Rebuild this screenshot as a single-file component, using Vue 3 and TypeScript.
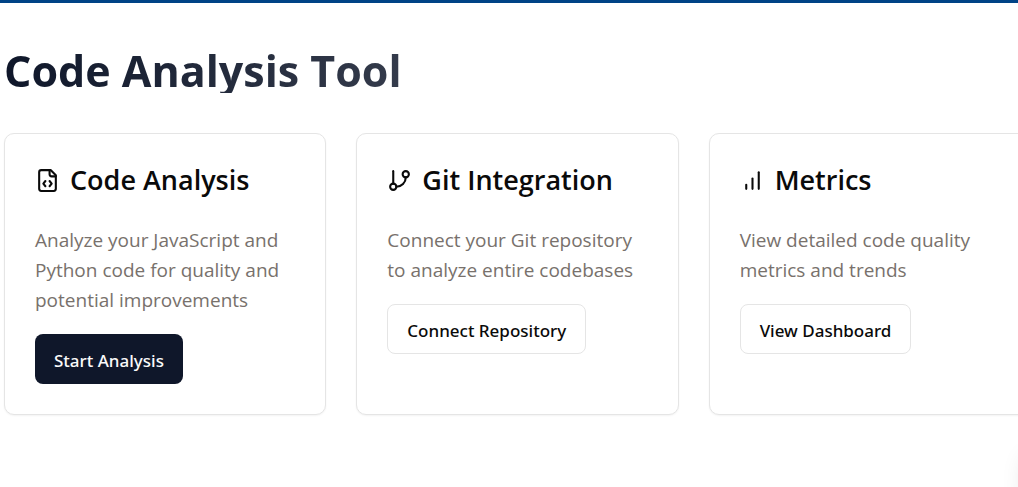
<script setup lang="ts">
interface Feature {
  icon: 'file' | 'branch' | 'bars'
  title: string
  description: string
  action: string
  primary?: boolean
}

const features: Feature[] = [
  {
    icon: 'file',
    title: 'Code Analysis',
    description: 'Analyze your JavaScript and Python code for quality and potential improvements',
    action: 'Start Analysis',
    primary: true,
  },
  {
    icon: 'branch',
    title: 'Git Integration',
    description: 'Connect your Git repository to analyze entire codebases',
    action: 'Connect Repository',
  },
  {
    icon: 'bars',
    title: 'Metrics',
    description: 'View detailed code quality metrics and trends',
    action: 'View Dashboard',
  },
]
</script>

<template>
  <div class="page">
    <main class="content">
      <h1 class="heading">Code Analysis Tool</h1>
      <div class="cards">
        <section v-for="feature in features" :key="feature.title" class="card">
          <h2 class="title">
            <svg class="icon" viewBox="0 0 24 24" aria-hidden="true">
              <template v-if="feature.icon === 'file'">
                <path d="M15 2H6a2 2 0 0 0-2 2v16a2 2 0 0 0 2 2h12a2 2 0 0 0 2-2V7Z" />
                <path d="M14 2v4a2 2 0 0 0 2 2h4" />
                <path d="M10 12.5 8 15l2 2.5" />
                <path d="m14 12.5 2 2.5-2 2.5" />
              </template>
              <template v-else-if="feature.icon === 'branch'">
                <line x1="6" x2="6" y1="3" y2="15" />
                <circle cx="18" cy="6" r="3" />
                <circle cx="6" cy="18" r="3" />
                <path d="M18 9a9 9 0 0 1-9 9" />
              </template>
              <template v-else>
                <line x1="6" x2="6" y1="20" y2="16" />
                <line x1="12" x2="12" y1="20" y2="10" />
                <line x1="18" x2="18" y1="20" y2="4" />
              </template>
            </svg>
            <span>{{ feature.title }}</span>
          </h2>
          <p class="description">{{ feature.description }}</p>
          <button type="button" class="button" :class="{ primary: feature.primary }">
            {{ feature.action }}
          </button>
        </section>
      </div>
    </main>
    <div class="corner-panel" aria-hidden="true"></div>
  </div>
</template>

<style>
body {
  margin: 0;
  background: #fff;
}
</style>

<style scoped>
.page {
  position: relative;
  box-sizing: border-box;
  min-height: 100vh;
  overflow: hidden;
  border-top: 3px solid #004386;
  color: #0a0a0a;
  font-family: 'Segoe UI', 'Open Sans', 'Noto Sans', sans-serif;
}

.content {
  margin-right: -13px;
  padding: 45px 0 0 4px;
}

.heading {
  margin: 0 0 40px;
  font-size: 43px;
  font-weight: 700;
  line-height: 45px;
  color: transparent;
  background: linear-gradient(to right, #0f172a, rgb(15 23 42 / 60%));
  background-clip: text;
  -webkit-background-clip: text;
}

.cards {
  display: grid;
  grid-template-columns: repeat(3, minmax(0, 1fr));
  gap: 30px;
}

.card {
  padding: 30px;
  border: 1px solid #e5e5e5;
  border-radius: 10px;
  background: #fff;
  box-shadow: 0 1px 2px rgb(0 0 0 / 5%);
}

.title {
  display: flex;
  align-items: center;
  gap: 10px;
  margin: 0 0 29px;
  font-size: 27px;
  font-weight: 600;
  line-height: 32px;
}

.icon {
  flex: none;
  width: 25px;
  height: 25px;
  fill: none;
  stroke: currentColor;
  stroke-width: 2;
  stroke-linecap: round;
  stroke-linejoin: round;
}

.description {
  margin: 0 0 19px;
  color: #78716c;
  font-size: 19px;
  line-height: 30px;
}

.button {
  height: 50px;
  padding: 2px 19px 0;
  border: 1px solid #e5e5e5;
  border-radius: 8px;
  background: #fff;
  color: #0a0a0a;
  font-family: 'Noto Sans', 'Open Sans', sans-serif;
  font-size: 17px;
  font-weight: 500;
}

.primary {
  border: 0;
  background: #0f172a;
  color: #fafafa;
}

.corner-panel {
  position: absolute;
  right: -44px;
  bottom: -40px;
  width: 36px;
  height: 70px;
  border-radius: 8px;
  box-shadow: 0 0 24px rgb(0 0 0 / 14%);
}
</style>
